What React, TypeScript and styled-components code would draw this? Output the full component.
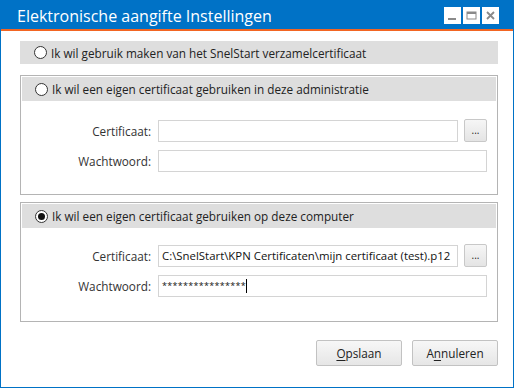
import styled, { createGlobalStyle } from 'styled-components';

const GlobalStyle = createGlobalStyle`
  html, body {
    margin: 0;
    padding: 0;
    background: #fff;
  }
  * {
    box-sizing: border-box;
  }
`;

const Window = styled.div`
  width: 514px;
  height: 388px;
  border: 1px solid #0072c6;
  display: flex;
  flex-direction: column;
  background: #fff;
  font-family: 'Open Sans', 'Noto Sans', sans-serif;
  font-size: 11.75px;
  color: #222;
`;

const TitleBar = styled.div`
  height: 30px;
  background: #0072c6;
  border-bottom: 2px solid #f26522;
  display: flex;
  align-items: flex-start;
  justify-content: space-between;
  padding: 0 14px 0 16px;
  flex-shrink: 0;
`;

const Title = styled.span`
  color: #fff;
  font-size: 16px;
  line-height: 28px;
  margin-top: 1px;
`;

const WinButtons = styled.div`
  display: flex;
  gap: 2px;
  margin-top: 6px;
`;

const WinButton = styled.div`
  width: 17px;
  height: 17px;
  background: #fff;
  display: flex;
  align-items: center;
  justify-content: center;
`;

const Body = styled.div`
  flex: 1;
  display: flex;
  flex-direction: column;
  padding: 10px 15px 0 19px;
`;

const SimpleOption = styled.div`
  height: 23px;
  background: #dedede;
  display: flex;
  align-items: center;
  padding-left: 14px;
  margin-bottom: 11px;
`;

const Group = styled.div<{ $gap: number }>`
  border: 1px solid #b4b4b4;
  padding: 1px;
  height: 120px;
  display: flex;
  flex-direction: column;
  margin-bottom: ${(p) => p.$gap}px;
`;

const GroupHeader = styled.div`
  height: 24px;
  background: #dedede;
  display: flex;
  align-items: center;
  padding-left: 13px;
  flex-shrink: 0;
`;

const Fields = styled.div<{ $top: number }>`
  display: flex;
  flex-direction: column;
  gap: 8px;
  padding-top: ${(p) => p.$top}px;
  padding-right: 9px;
`;

const FieldRow = styled.div`
  display: flex;
  align-items: center;
  gap: 7px;
`;

const Label = styled.span`
  width: 129px;
  text-align: right;
  color: #333;
`;

const Input = styled.div`
  flex: 1;
  height: 22px;
  border: 1px solid #d4d4d4;
  display: flex;
  align-items: center;
  padding-left: 3px;
  color: #111;
  font-size: 11.4px;
  white-space: nowrap;
  overflow: hidden;
`;

const Masked = styled.span`
  font-size: 9px;
  letter-spacing: 0.3px;
  position: relative;
  top: -1px;
`;

const Caret = styled.span`
  display: inline-block;
  width: 1px;
  height: 14px;
  background: #000;
  margin-left: 0;
`;

const Browse = styled.div`
  width: 23px;
  height: 23px;
  border: 1px solid #c8c8c8;
  border-radius: 2px;
  background: linear-gradient(#f6f6f6, #e4e4e4);
  display: flex;
  align-items: center;
  justify-content: center;
  font-size: 10px;
  line-height: 1;
  padding-bottom: 1px;
  margin-left: -1px;
`;

const RadioLabel = styled.label`
  display: flex;
  align-items: center;
  gap: 4px;
`;

const RadioCircle = styled.span<{ $checked?: boolean }>`
  width: 13px;
  height: 13px;
  border-radius: 50%;
  border: 1px solid #333;
  background: #fff;
  display: flex;
  align-items: center;
  justify-content: center;
  &::after {
    content: '';
    width: 7px;
    height: 7px;
    border-radius: 50%;
    background: #111;
    display: ${(p) => (p.$checked ? 'block' : 'none')};
  }
`;

const Footer = styled.div`
  display: flex;
  justify-content: flex-end;
  gap: 10px;
  margin-top: 18px;
`;

const Button = styled.button`
  width: 86px;
  height: 26px;
  border: 1px solid #c2c2c2;
  border-radius: 2px;
  background: linear-gradient(#f7f7f7, #e6e6e6);
  font-family: inherit;
  font-size: 11.75px;
  color: #222;
  padding: 0;
  & u {
    text-underline-offset: 2px;
  }
`;

function Radio({ checked, children }: { checked?: boolean; children: React.ReactNode }) {
  return (
    <RadioLabel>
      <RadioCircle $checked={checked} />
      {children}
    </RadioLabel>
  );
}

export default function App() {
  return (
    <>
      <GlobalStyle />
      <Window>
        <TitleBar>
          <Title>Elektronische aangifte Instellingen</Title>
          <WinButtons>
            <WinButton>
              <svg width="11" height="11" viewBox="0 0 11 11">
                <rect x="1" y="8" width="8" height="2" fill="#8a8a8a" />
              </svg>
            </WinButton>
            <WinButton>
              <svg width="11" height="11" viewBox="0 0 11 11">
                <rect x="1" y="2" width="9" height="7" fill="none" stroke="#8a8a8a" strokeWidth="1" />
                <rect x="1" y="2" width="9" height="2" fill="#8a8a8a" />
              </svg>
            </WinButton>
            <WinButton>
              <svg width="11" height="11" viewBox="0 0 11 11">
                <path d="M2 2 L9 9 M9 2 L2 9" stroke="#8a8a8a" strokeWidth="1.8" />
              </svg>
            </WinButton>
          </WinButtons>
        </TitleBar>
        <Body>
          <SimpleOption>
            <Radio>Ik wil gebruik maken van het SnelStart verzamelcertificaat</Radio>
          </SimpleOption>

          <Group $gap={7}>
            <GroupHeader>
              <Radio>Ik wil een eigen certificaat gebruiken in deze administratie</Radio>
            </GroupHeader>
            <Fields $top={18}>
              <FieldRow>
                <Label>Certificaat:</Label>
                <Input />
                <Browse>...</Browse>
              </FieldRow>
              <FieldRow>
                <Label>Wachtwoord:</Label>
                <Input />
              </FieldRow>
            </Fields>
          </Group>

          <Group $gap={0}>
            <GroupHeader>
              <Radio checked>Ik wil een eigen certificaat gebruiken op deze computer</Radio>
            </GroupHeader>
            <Fields $top={16}>
              <FieldRow>
                <Label>Certificaat:</Label>
                <Input>C:\SnelStart\KPN Certificaten\mijn certificaat (test).p12</Input>
                <Browse>...</Browse>
              </FieldRow>
              <FieldRow>
                <Label>Wachtwoord:</Label>
                <Input>
                  <Masked>****************</Masked>
                  <Caret />
                </Input>
              </FieldRow>
            </Fields>
          </Group>

          <Footer>
            <Button>
              <u>O</u>pslaan
            </Button>
            <Button>
              A<u>n</u>nuleren
            </Button>
          </Footer>
        </Body>
      </Window>
    </>
  );
}
